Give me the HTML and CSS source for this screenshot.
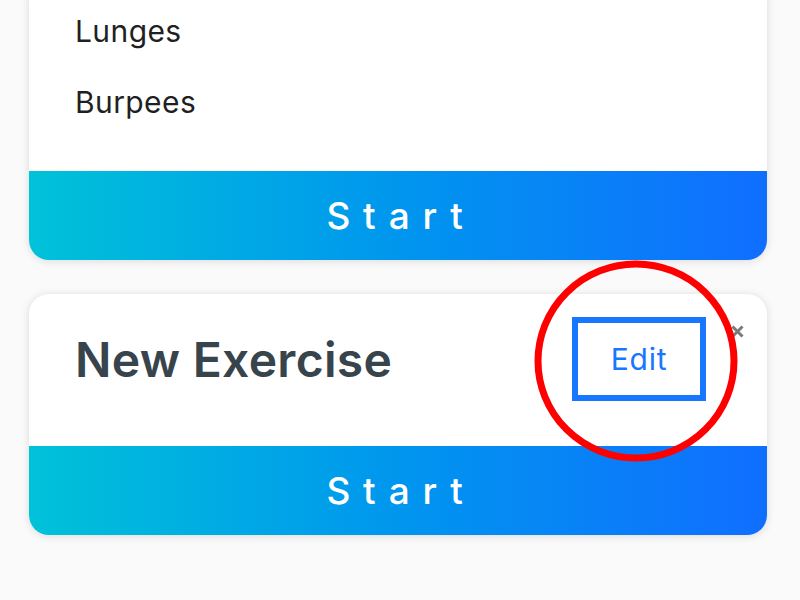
FILE: index.html
```html
<!DOCTYPE html>
<html lang="en">
<head>
<meta charset="utf-8">
<title>Workouts</title>
<link rel="stylesheet" href="styles.css">
</head>
<body>
<main class="list">
  <section class="card card-first">
    <ul class="exercises">
      <li>Lunges</li>
      <li>Burpees</li>
    </ul>
    <button class="start">Start</button>
  </section>

  <section class="card">
    <div class="card-head">
      <h2 class="title">New Exercise</h2>
      <button class="edit">Edit</button>
    </div>
    <span class="close" aria-label="Delete">
      <svg viewBox="0 0 12 12" width="15" height="15"><path d="M2 2 L10 10 M10 2 L2 10" stroke="#7a7a7a" stroke-width="2.4" stroke-linecap="butt"/></svg>
    </span>
    <button class="start">Start</button>
    <svg class="highlight" viewBox="0 0 210 210" width="210" height="210"><ellipse cx="105" cy="105" rx="98" ry="97" fill="none" stroke="#f00" stroke-width="7"/></svg>
  </section>
</main>
</body>
</html>
```
FILE: styles.css
```css
* { box-sizing: border-box; }
html, body { margin: 0; padding: 0; }
body {
  background: #fafafa;
  font-family: "Inter", "Liberation Sans", sans-serif;
  width: 800px;
  height: 600px;
  overflow: hidden;
}
.list {
  display: flex;
  flex-direction: column;
  gap: 34px;
  padding-left: 29px;
  width: 767px;
}
.card {
  position: relative;
  background: #fff;
  border-radius: 20px;
  box-shadow: 0 1px 8px rgba(0, 0, 0, 0.13);
  display: flex;
  flex-direction: column;
}
.card-first { margin-top: -22px; }
.exercises {
  list-style: none;
  margin: 0;
  padding: 18px 0 33px 46px;
}
.exercises li {
  font-size: 30px;
  line-height: 71px;
  color: #1f1f24;
  letter-spacing: 0.4px;
}
.start {
  display: block;
  width: 100%;
  height: 89px;
  border: 0;
  margin: 0;
  padding: 0 0 0 6px;
  border-radius: 0 0 20px 20px;
  background: linear-gradient(to right, #00c2d8, #0096ee 50%, #106eff);
  color: #fff;
  font-family: inherit;
  font-size: 37px;
  font-weight: 500;
  letter-spacing: 12.8px;
  text-align: center;
}
.card-head {
  display: flex;
  align-items: center;
  justify-content: space-between;
  padding: 23px 61px 45px 46px;
}
.title {
  margin: 0;
  font-size: 48px;
  font-weight: 600;
  color: #37444c;
  letter-spacing: 0.3px;
}
.edit {
  width: 134px;
  height: 84px;
  background: #fff;
  border: 6px solid #1777ff;
  color: #1777ff;
  font-family: inherit;
  font-size: 30px;
  font-weight: 400;
  letter-spacing: 0.8px;
  padding: 0;
}
.close {
  position: absolute;
  top: 30px;
  right: 22px;
  width: 15px;
  height: 15px;
  display: flex;
}
.highlight {
  position: absolute;
  left: 502px;
  top: -38px;
  pointer-events: none;
}
```
